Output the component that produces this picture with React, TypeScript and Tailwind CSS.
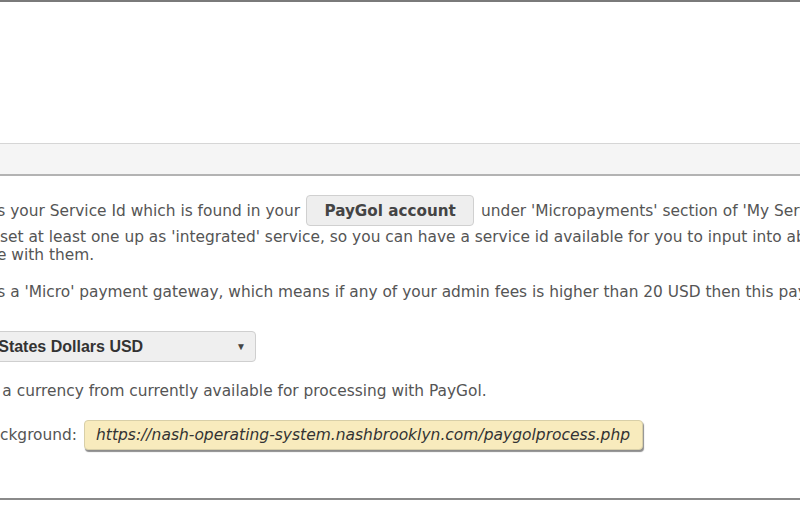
import React from "react";

export default function App() {
  const body = "font-['DejaVu_Sans',Verdana,sans-serif] text-[15.4px] leading-[18px] text-[#555]";
  return (
    <div className="w-[800px] h-[510px] overflow-hidden bg-white relative">
      <div className="h-[2px] bg-[#7a7a7a]" />
      <div className="h-[141px]" />
      <div className="h-[33px] bg-[#f5f5f5] border-t border-[#d6d6d6] border-b-2 border-b-[#b3b3b3]" />
      <div className={`${body} pt-[19px] whitespace-nowrap`}>
        <div className="flex items-center h-[31px] ml-[-7px]">
          <span className="shrink-0">is your Service Id which is found in your</span>
          <span className="shrink-0 ml-[6px] mr-[7px] h-[31px] w-[168px] justify-center flex items-center rounded-[4px] border border-[#d0d0d0] bg-[#eeeeee] font-bold text-[#444] text-[15.2px]">PayGol account</span>
          <span className="shrink-0">under 'Micropayments' section of 'My Services' tab.</span>
        </div>
        <div className="mt-[2px] ml-[0px]">set at least one up as 'integrated' service, so you can have a service id available for you to input into above field.</div>
        <div className="ml-[-3px]">e with them.</div>
        <div className="mt-[19px] ml-[-7px]">is a 'Micro' payment gateway, which means if any of your admin fees is higher than 20 USD then this payment method will not be shown.</div>
        <div className="mt-[30px] ml-[-69px] w-[325px] h-[31px] rounded-[4px] border border-[#cfcfcf] bg-[#efefef] flex items-center justify-between pl-[12px] pr-[9px] font-['Liberation_Sans',Arial,sans-serif] font-bold text-[16px] text-[#333]">
          <span>United States Dollars USD</span>
          <span className="text-[10px] text-[#444]">▼</span>
        </div>
        <div className="mt-[20px] ml-[-50px]">Select a currency from currently available for processing with PayGol.</div>
        <div className="mt-[20px] flex items-center ml-[-20px]">
          <span className="shrink-0">Background:</span>
          <span className="shrink-0 ml-[7px] h-[30px] w-[559px] flex items-center pl-[11px] rounded-[4px] border border-[#d8cfa8] bg-[#f8ebbd] shadow-[1px_2px_1px_rgba(0,0,0,0.45)] italic text-[15.5px] text-[#333]">https://nash-operating-system.nashbrooklyn.com/paygolprocess.php</span>
        </div>
      </div>
      <div className="absolute left-0 right-0 top-[498px] h-[2px] bg-[#8a8a8a]" />
    </div>
  );
}
